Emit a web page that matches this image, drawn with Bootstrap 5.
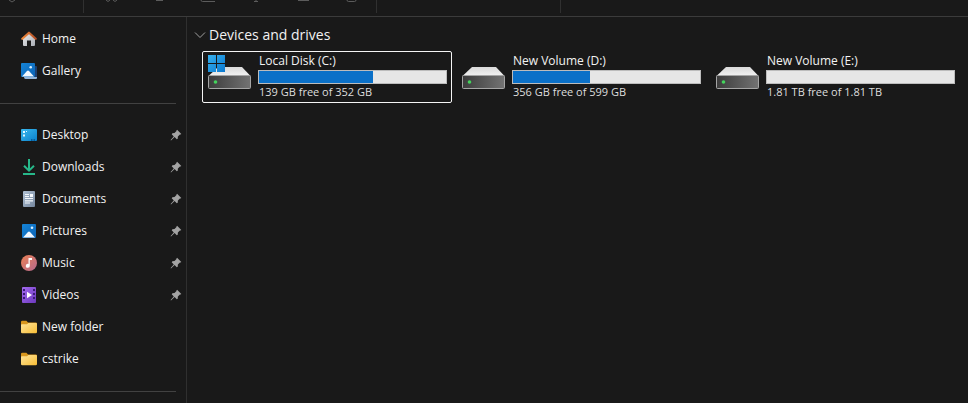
<!DOCTYPE html>
<html lang="en">
<head>
<meta charset="utf-8">
<meta name="viewport" content="width=device-width, initial-scale=1">
<title>This PC</title>
<link href="https://cdn.jsdelivr.net/npm/bootstrap@5.3.0/dist/css/bootstrap.min.css" rel="stylesheet">
<style>
  body { background: #191919; color: #f2f2f2; font-family: "Open Sans", "Noto Sans", sans-serif; font-size: 12px; line-height: 16px; }
  svg { display: block; flex: none; }
  .toolbar { height: 17px; border-bottom: 1px solid #3b3b3b; padding-left: 6px; color: #5c5c5c; overflow: hidden; }
  .tool { width: 48px; color: inherit; }
  .tool-first { width: 12px; }
  .tool-gap { width: 65px; }
  .tool-rule { width: 1px; height: 13px; background: #303030; }
  .tool-view { width: 183px; }
  .side { width: 187px; border-right: 1px solid #2f2f2f; padding-top: 6px; }
  .place { height: 32px; padding-left: 21px; gap: 5px; color: #f2f2f2; font-size: 12px; }
  .pin { margin-left: auto; margin-right: 4px; }
  .divider { margin: 16px 10px 15px 0; border-top: 1px solid #414141; opacity: 1; }
  .content { padding: 7px 8px 8px 7px; }
  .group-toggle { gap: 3px; color: #f2f2f2; font-size: 14px; line-height: 22px; }
  .drives { display: grid; grid-template-columns: repeat(auto-fill, 250px); gap: 4px; padding: 5px 0 0 8px; }
  .drive { height: 52px; border: 1px solid transparent; padding: 1px 4px 0 5px; gap: 7px; color: #f2f2f2; }
  .drive.selected { border-color: #f5f5f5; border-radius: 2px; }
  .drive-name, .drive-free { padding-left: 1px; }
  .drive-free { color: #dedede; font-size: 11px; }
  .usage { height: 14px; background: #e6e6e6; border: 1px solid #bcbcbc; border-radius: 0; margin: 1px 0 0; }
  .usage .progress-bar { background: #0a70c8; }
</style>
<script src="https://cdn.jsdelivr.net/npm/bootstrap@5.3.0/dist/js/bootstrap.bundle.min.js"></script>
</head>
<body class="d-flex flex-column min-vh-100">

<svg width="0" height="0" class="position-absolute" aria-hidden="true">
  <defs>
    <linearGradient id="blue" x2="1" y2="1"><stop stop-color="#1585d8"/><stop offset="1" stop-color="#0b62b4"/></linearGradient>
    <linearGradient id="desk" x2="1" y2="1"><stop stop-color="#39b9ef"/><stop offset="1" stop-color="#0b7fc8"/></linearGradient>
    <linearGradient id="roof" x2="1"><stop stop-color="#f08a3c"/><stop offset="1" stop-color="#b14d25"/></linearGradient>
    <linearGradient id="wall" y2="1" x2="1"><stop stop-color="#ededed"/><stop offset="1" stop-color="#a9adb5"/></linearGradient>
    <linearGradient id="doc" x2="1" y2="1"><stop stop-color="#b0c1d4"/><stop offset="1" stop-color="#75879e"/></linearGradient>
    <linearGradient id="music" x2="1" y2="1"><stop stop-color="#ec8155"/><stop offset="1" stop-color="#b4698e"/></linearGradient>
    <linearGradient id="video" x2="1" y2="1"><stop stop-color="#a36af0"/><stop offset="1" stop-color="#6d39bd"/></linearGradient>
    <linearGradient id="fold" x2="1" y2="1"><stop stop-color="#ffe49a"/><stop offset="1" stop-color="#f7bd35"/></linearGradient>
    <linearGradient id="top" x2="0" y2="1"><stop stop-color="#d9d9d9"/><stop offset="1" stop-color="#f2f2f2"/></linearGradient>
    <linearGradient id="front" x2="1" y2="0"><stop stop-color="#3c3c3c"/><stop offset="1" stop-color="#737373"/></linearGradient>
    <linearGradient id="win" x2="1" y2="1"><stop stop-color="#37b1ee"/><stop offset="1" stop-color="#0a78cf"/></linearGradient>
    <symbol id="i-pin" viewBox="0 0 12 12"><path fill="#a3a3a3" d="M7.1.8 11.3 4.9 10.5 5.6 9.9 5.5 7.9 7.6 7.7 9.7 6.8 10.3 4.6 8.1 1 11.4.6 11 3.8 7.4 1.7 5.2 2.4 4.3 4.5 4.1 6.5 2.1 6.4 1.5Z"/></symbol>
    <symbol id="i-folder" viewBox="0 0 16 16"><path fill="#d8961d" d="M0 3q0-1.3 1.3-1.3H5.400L7 3.400H14.700Q16 3.400 16 4.700V8H0Z"/><path fill="url(#fold)" d="M0 6q0-.8.8-.8H6L7.400 4H15q1 0 1 1v8q0 1.300-1.300 1.300H1.300Q0 14.300 0 13Z"/></symbol>
    <symbol id="i-drive" viewBox="0 0 43 36"><path fill="url(#top)" d="M10 13H34L42.500 22H.5Z"/><rect x=".5" y="21.500" width="42" height="13" rx="1" fill="url(#front)" stroke="#a5a5a5"/><circle cx="7.500" cy="28" r="1.800" fill="#44d45c"/></symbol>
  </defs>
</svg>

<header class="toolbar d-flex flex-none">
  <button class="tool tool-first btn p-0 border-0 rounded-0 d-flex" aria-label="New"><svg width="12" height="3"><path d="M3 0 6 2 9 0" fill="none" stroke="currentColor"/></svg></button>
  <span class="tool-gap"></span>
  <span class="tool-rule"></span>
  <button class="tool btn p-0 border-0 rounded-0 d-flex justify-content-center ms-1" aria-label="Cut"><svg width="14" height="3"><path d="M1 0Q3 3 5 0M8 0Q10 3 12 0" fill="none" stroke="currentColor"/></svg></button>
  <button class="tool btn p-0 border-0 rounded-0 d-flex justify-content-center" aria-label="Copy"><svg width="14" height="3"><path d="M3 .5H10" stroke="currentColor"/></svg></button>
  <button class="tool btn p-0 border-0 rounded-0 d-flex justify-content-center" aria-label="Paste"><svg width="16" height="3"><path d="M1 0Q1 1.500 2.500 1.500H15" fill="none" stroke="currentColor"/></svg></button>
  <button class="tool btn p-0 border-0 rounded-0 d-flex justify-content-center" aria-label="Rename"><svg width="14" height="3"><path d="M7 0V2M5 1.500H9" fill="none" stroke="currentColor"/></svg></button>
  <button class="tool btn p-0 border-0 rounded-0 d-flex justify-content-center" aria-label="Share"><svg width="14" height="3"><path d="M1 .5H12" stroke="currentColor"/></svg></button>
  <button class="tool btn p-0 border-0 rounded-0 d-flex justify-content-center" aria-label="Delete"><svg width="14" height="3"><path d="M2 0Q2 1.500 3.500 1.500H9.500Q11 1.500 11 0" fill="none" stroke="currentColor"/></svg></button>
  <span class="tool-rule"></span>
  <span class="tool-view"></span>
  <span class="tool-rule"></span>
</header>

<div class="d-flex flex-grow-1">
  <nav class="side flex-shrink-0" aria-label="Places">
    <a href="#" class="place d-flex align-items-center text-decoration-none"><svg width="16" height="16" viewBox="0 0 16 16"><path fill="url(#wall)" d="M2 7 8 2 14 7V14Q14 15 13 15H10V9.500H6V15H3Q2 15 2 14Z"/><path fill="none" stroke="url(#roof)" stroke-width="2.200" stroke-linecap="round" stroke-linejoin="round" d="M1.300 7.800 8 1.700 14.700 7.800"/></svg>Home</a>
    <a href="#" class="place d-flex align-items-center text-decoration-none"><svg width="16" height="16" viewBox="0 0 16 16"><path fill="#1c3f70" d="M4 3H15Q16 3 16 4V14.500H4Z"/><path fill="#91b4d8" d="M3 14H16V15Q16 16 15 16H4.500Q3 16 3 14Z"/><rect width="14" height="14" rx="1" fill="url(#blue)"/><path fill="#f1f8ff" d="M1 13.500 5.800 8.200Q7 7 8.200 8.200L13 13.500Z"/><circle cx="9.700" cy="4.200" r="1.300" fill="#d7efff"/></svg>Gallery</a>
    <hr class="divider">
    <a href="#" class="place d-flex align-items-center text-decoration-none"><svg width="16" height="16" viewBox="0 0 16 16"><rect y="2" width="16" height="12" rx="1" fill="url(#desk)"/><path fill="#e0f7ff" d="M2 4H4V6H2ZM2 7.500H4V9.500H2ZM5 4H6V5H5Z"/><path fill="#075d9d" d="M10 12H11.500V14H10ZM12.500 12H14V14H12.500Z"/></svg>Desktop<svg class="pin" width="12" height="12"><use href="#i-pin"/></svg></a>
    <a href="#" class="place d-flex align-items-center text-decoration-none"><svg width="16" height="16" viewBox="0 0 16 16"><path fill="none" stroke="#27b88a" stroke-width="2" d="M8 0V11.500M3 6.700 8 11.700 13 6.700M2 15H14"/></svg>Downloads<svg class="pin" width="12" height="12"><use href="#i-pin"/></svg></a>
    <a href="#" class="place d-flex align-items-center text-decoration-none"><svg width="16" height="16" viewBox="0 0 16 16"><rect x="2" width="12" height="16" rx="1" fill="url(#doc)"/><path stroke="#f4f8fc" stroke-width="1.200" d="M4 3.500H8M4 5.500H8M4 7.500H12M4 9.800H12M4 12H9"/><rect x="9" y="3" width="3" height="3" fill="#f4f8fc"/></svg>Documents<svg class="pin" width="12" height="12"><use href="#i-pin"/></svg></a>
    <a href="#" class="place d-flex align-items-center text-decoration-none"><svg width="16" height="16" viewBox="0 0 16 16"><rect x="1" y="1" width="14" height="14" rx="1" fill="url(#blue)"/><path fill="#f1f8ff" d="M2 14.500 6.800 9.200Q8 8 9.200 9.200L14 14.500Z"/><circle cx="11" cy="4.800" r="1.300" fill="#d7efff"/></svg>Pictures<svg class="pin" width="12" height="12"><use href="#i-pin"/></svg></a>
    <a href="#" class="place d-flex align-items-center text-decoration-none"><svg width="16" height="16" viewBox="0 0 16 16"><circle cx="8" cy="8" r="8" fill="url(#music)"/><path fill="#fff" d="M7.500 3H11V5H8.800V10.500A2 2 0 1 1 7.500 8.900Z"/></svg>Music<svg class="pin" width="12" height="12"><use href="#i-pin"/></svg></a>
    <a href="#" class="place d-flex align-items-center text-decoration-none"><svg width="16" height="16" viewBox="0 0 16 16"><rect x="1" width="14" height="16" rx="1" fill="url(#video)"/><path fill="#3c1b78" d="M2 2H4V4H2ZM2 6H4V8H2ZM2 10H4V12H2ZM12 2H14V4H12ZM12 6H14V8H12ZM12 10H14V12H12Z"/><path fill="#fff" d="M6 4.800 11 8 6 11.200Z"/></svg>Videos<svg class="pin" width="12" height="12"><use href="#i-pin"/></svg></a>
    <a href="#" class="place d-flex align-items-center text-decoration-none"><svg width="16" height="16"><use href="#i-folder"/></svg>New folder</a>
    <a href="#" class="place d-flex align-items-center text-decoration-none"><svg width="16" height="16"><use href="#i-folder"/></svg>cstrike</a>
    <hr class="divider mb-0">
  </nav>

  <main class="content flex-grow-1">
    <button class="group-toggle btn p-0 border-0 d-flex align-items-center" aria-expanded="true"><svg width="12" height="12" viewBox="0 0 12 12"><path d="M1 3.500 6 8.500 11 3.500" fill="none" stroke="#a0a0a0"/></svg>Devices and drives</button>
    <div class="drives">
      <a href="#" class="drive selected d-flex text-decoration-none">
        <svg width="43" height="38" viewBox="0 0 43 38"><g transform="translate(0 1)"><use href="#i-drive" width="43" height="36"/></g><path fill="url(#win)" d="M0 2H8V10H0ZM9 2H17V10H9ZM0 11H8V19H0ZM9 11H17V19H9Z"/></svg>
        <div class="flex-grow-1"><div class="drive-name">Local Disk (C:)</div><div class="usage progress" role="progressbar" aria-label="Space used on C"><div class="progress-bar" style="width:61%"></div></div><div class="drive-free">139 GB free of 352 GB</div></div>
      </a>
      <a href="#" class="drive d-flex text-decoration-none">
        <svg width="43" height="38" viewBox="0 0 43 38"><g transform="translate(0 1)"><use href="#i-drive" width="43" height="36"/></g></svg>
        <div class="flex-grow-1"><div class="drive-name">New Volume (D:)</div><div class="usage progress" role="progressbar" aria-label="Space used on D"><div class="progress-bar" style="width:41%"></div></div><div class="drive-free">356 GB free of 599 GB</div></div>
      </a>
      <a href="#" class="drive d-flex text-decoration-none">
        <svg width="43" height="38" viewBox="0 0 43 38"><g transform="translate(0 1)"><use href="#i-drive" width="43" height="36"/></g></svg>
        <div class="flex-grow-1"><div class="drive-name">New Volume (E:)</div><div class="usage progress" role="progressbar" aria-label="Space used on E"><div class="progress-bar" style="width:0%"></div></div><div class="drive-free">1.81 TB free of 1.81 TB</div></div>
      </a>
    </div>
  </main>
</div>
</body>
</html>
